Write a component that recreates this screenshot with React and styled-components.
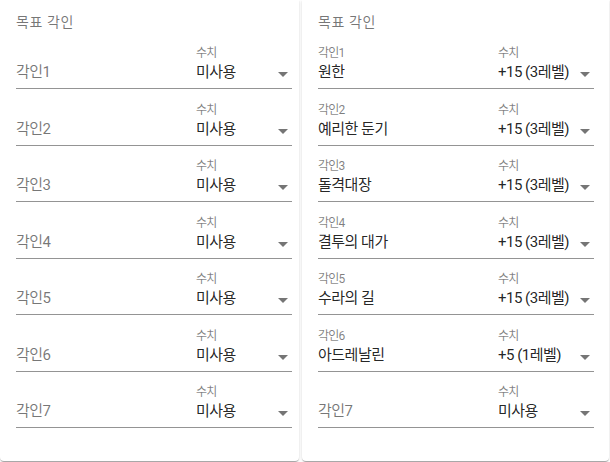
import React from "react";
import styled, { createGlobalStyle } from "styled-components";

const Global = createGlobalStyle`
  html, body { margin: 0; padding: 0; background: #fff; }
  body { font-family: Roboto, "Noto Sans CJK KR", "Noto Sans", sans-serif; }
`;

const Page = styled.div`
  display: grid;
  grid-template-columns: 299px 307px;
  column-gap: 3px;
  width: 610px;
  height: 462px;
  overflow: hidden;
`;

const Card = styled.section`
  background: #fff;
  border-radius: 0 0 4px 4px;
  box-shadow: 0px 2px 1px -1px rgba(0, 0, 0, 0.2), 0px 1px 1px 0px rgba(0, 0, 0, 0.14),
    0px 1px 3px 0px rgba(0, 0, 0, 0.12);
  padding: 12px 0 0 16px;
  height: 461px;
  box-sizing: border-box;
`;

const Title = styled.div`
  font-size: 14px;
  line-height: 20.5px;
  height: 20.5px;
  color: rgba(0, 0, 0, 0.54);
  letter-spacing: 0.6px;
`;

const Row = styled.div`
  display: flex;
  width: 276px;
  height: 56.5px;
`;

const Field = styled.div`
  position: relative;
  display: flex;
  flex-direction: column;
  justify-content: flex-end;
  width: ${(p) => p.$w}px;
  border-bottom: 1px solid rgba(0, 0, 0, 0.42);
`;

const Label = styled.div`
  font-size: 12px;
  line-height: 16px;
  height: 16px;
  margin-bottom: 2px;
  color: rgba(0, 0, 0, 0.5);
  letter-spacing: -0.8px;
  white-space: nowrap;
`;

const Value = styled.div`
  font-size: 15px;
  line-height: 19px;
  padding-bottom: 6px;
  letter-spacing: -0.5px;
  color: ${(p) => (p.$placeholder ? "rgba(0, 0, 0, 0.54)" : "rgba(0, 0, 0, 0.87)")};
  white-space: nowrap;
`;

const Arrow = styled.svg`
  position: absolute;
  right: 4px;
  bottom: 11px;
  width: 10px;
  height: 5px;
  fill: rgba(0, 0, 0, 0.54);
`;

function SelectField({ value }) {
  return (
    <Field $w={96}>
      <Label>수치</Label>
      <Value>{value}</Value>
      <Arrow viewBox="0 0 10 5">
        <path d="M0 0l5 5 5-5z" />
      </Arrow>
    </Field>
  );
}

function EngraveRow({ index, name, level }) {
  return (
    <Row>
      <Field $w={180}>
        {name ? <Label>각인{index}</Label> : null}
        <Value $placeholder={!name}>{name || `각인${index}`}</Value>
      </Field>
      <SelectField value={level} />
    </Row>
  );
}

const leftRows = [1, 2, 3, 4, 5, 6, 7].map((i) => ({ index: i, name: "", level: "미사용" }));

const rightRows = [
  { index: 1, name: "원한", level: "+15 (3레벨)" },
  { index: 2, name: "예리한 둔기", level: "+15 (3레벨)" },
  { index: 3, name: "돌격대장", level: "+15 (3레벨)" },
  { index: 4, name: "결투의 대가", level: "+15 (3레벨)" },
  { index: 5, name: "수라의 길", level: "+15 (3레벨)" },
  { index: 6, name: "아드레날린", level: "+5 (1레벨)" },
  { index: 7, name: "", level: "미사용" },
];

function EngraveCard({ rows }) {
  return (
    <Card>
      <Title>목표 각인</Title>
      {rows.map((r) => (
        <EngraveRow key={r.index} {...r} />
      ))}
    </Card>
  );
}

export default function App() {
  return (
    <>
      <Global />
      <Page>
        <EngraveCard rows={leftRows} />
        <EngraveCard rows={rightRows} />
      </Page>
    </>
  );
}
